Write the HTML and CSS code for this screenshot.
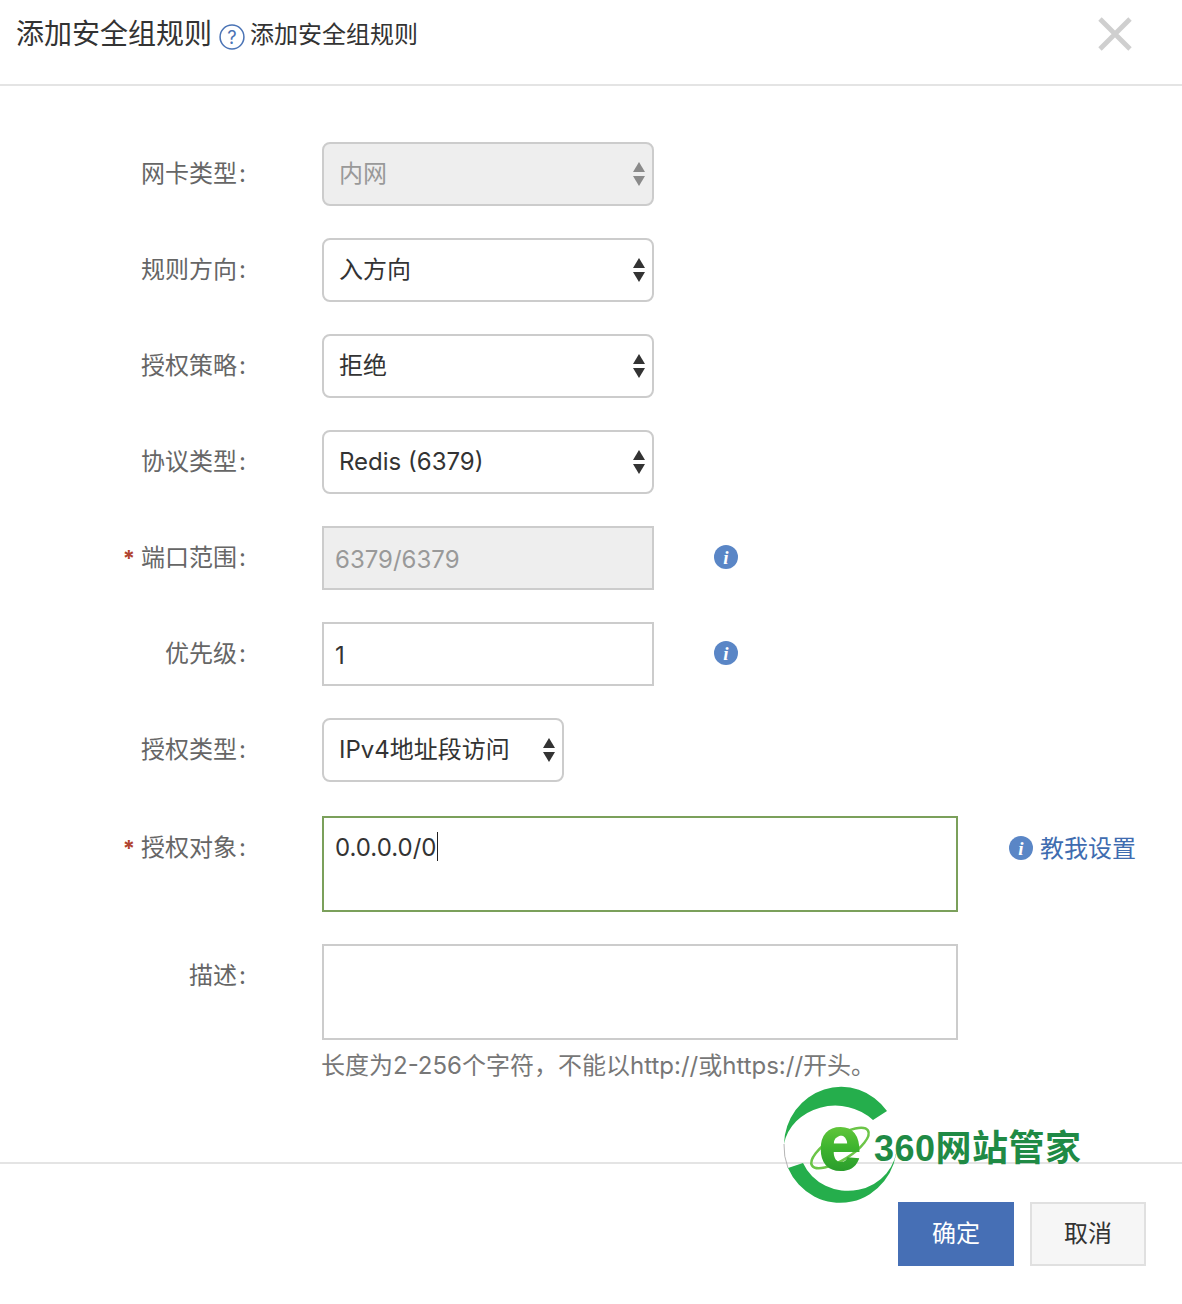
FILE: index.html
```html
<!DOCTYPE html>
<html lang="zh-CN">
<head>
    <meta charset="UTF-8">
    <title>添加安全组规则</title>
    <link rel="stylesheet" href="styles.css">
</head>
<body>
    <div class="dialog">
        <div class="dialog-header">
            <span class="dialog-title">添加安全组规则</span>
            <svg class="help-icon" viewBox="0 0 24 24">
                <circle cx="12" cy="12" r="11" fill="none" stroke="#4a73b5" stroke-width="1.4"/>
                <text x="12" y="18" text-anchor="middle" class="help-mark">?</text>
            </svg>
            <a class="dialog-subtitle">添加安全组规则</a>
            <svg class="close-icon" viewBox="0 0 34 34">
                <path d="M2 2 L32 32 M32 2 L2 32" stroke="#cfcfcf" stroke-width="4.8" fill="none"/>
            </svg>
        </div>

        <form class="dialog-body">
            <div class="form-row">
                <label class="form-label">网卡类型<span class="colon">:</span></label>
                <div class="select-wrap disabled">
                    <select class="form-select" disabled><option>内网</option></select>
                </div>
            </div>
            <div class="form-row">
                <label class="form-label">规则方向<span class="colon">:</span></label>
                <div class="select-wrap">
                    <select class="form-select"><option>入方向</option></select>
                </div>
            </div>
            <div class="form-row">
                <label class="form-label">授权策略<span class="colon">:</span></label>
                <div class="select-wrap">
                    <select class="form-select"><option>拒绝</option></select>
                </div>
            </div>
            <div class="form-row">
                <label class="form-label">协议类型<span class="colon">:</span></label>
                <div class="select-wrap">
                    <select class="form-select"><option>Redis (6379)</option></select>
                </div>
            </div>
            <div class="form-row">
                <label class="form-label"><span class="required">*</span>端口范围<span class="colon">:</span></label>
                <input class="form-input" type="text" value="6379/6379" disabled>
                <svg class="info-icon" viewBox="0 0 24 24">
                    <circle cx="12" cy="12" r="12" fill="#5a86c6"/>
                    <text x="12" y="18.5" text-anchor="middle" class="info-mark">i</text>
                </svg>
            </div>
            <div class="form-row">
                <label class="form-label">优先级<span class="colon">:</span></label>
                <input class="form-input" type="text" value="1">
                <svg class="info-icon" viewBox="0 0 24 24">
                    <circle cx="12" cy="12" r="12" fill="#5a86c6"/>
                    <text x="12" y="18.5" text-anchor="middle" class="info-mark">i</text>
                </svg>
            </div>
            <div class="form-row row-narrow">
                <label class="form-label">授权类型<span class="colon">:</span></label>
                <div class="select-wrap short">
                    <select class="form-select"><option>IPv4地址段访问</option></select>
                </div>
            </div>
            <div class="form-row">
                <label class="form-label"><span class="required">*</span>授权对象<span class="colon">:</span></label>
                <div class="area-wrap">
                    <textarea class="form-area focused">0.0.0.0/0</textarea>
                    <span class="caret"></span>
                </div>
                <a class="teach-link">
                    <svg class="info-icon small" viewBox="0 0 24 24">
                        <circle cx="12" cy="12" r="12" fill="#5a86c6"/>
                        <text x="12" y="18.5" text-anchor="middle" class="info-mark">i</text>
                    </svg>
                    教我设置
                </a>
            </div>
            <div class="form-row">
                <label class="form-label">描述<span class="colon">:</span></label>
                <div class="area-col">
                    <div class="area-wrap">
                        <textarea class="form-area"></textarea>
                    </div>
                    <p class="form-hint">长度为2-256个字符，不能以http://或https://开头。</p>
                </div>
            </div>
        </form>

        <div class="dialog-footer">
            <button class="btn btn-primary" type="button">确定</button>
            <button class="btn" type="button">取消</button>
        </div>

        <!-- watermark laid over the dialog -->
        <svg class="watermark" viewBox="0 0 310 130" width="310" height="130">
            <defs>
                <linearGradient id="eGreen" x1="0" y1="0" x2="0" y2="1">
                    <stop offset="0" stop-color="#8fdc4a"/>
                    <stop offset="0.55" stop-color="#3fb52f"/>
                    <stop offset="1" stop-color="#1f8f2b"/>
                </linearGradient>
            </defs>
            <path d="M4 64 A57 59 0 0 0 8 88" fill="none" stroke="#b5b5b5" stroke-width="1"/>
            <path d="M4 64 A57 59 0 0 1 107 31 L93 40 A52 46 0 0 0 4 64 Z" fill="#25ae4c"/>
            <path d="M8 88 L23 83 A49 46 0 0 0 117 64 A57 59 0 0 1 8 88 Z" fill="#25ae4c"/>
            <ellipse cx="60" cy="68" rx="33" ry="12" transform="rotate(-32 60 68)" fill="none" stroke="#6cc548" stroke-width="2.5"/>
            <text x="60" y="89" text-anchor="middle" class="wm-e" fill="url(#eGreen)" stroke="url(#eGreen)" stroke-width="2">e</text>
            <text x="94" y="81" class="wm-text">360网站管家</text>
        </svg>
    </div>
</body>
</html>
```

FILE: styles.css
```css
* {
    box-sizing: border-box;
}
body {
    margin: 0;
    background-color: white;
    font-family: Inter, "Noto Sans CJK SC", sans-serif;
    color: #333;
}
.dialog {
    position: relative;
    width: 1182px;
    height: 1304px;
    overflow: hidden;
}
.dialog-header {
    display: flex;
    align-items: center;
    height: 86px;
    padding: 0 50px 16px 16px;
    border-bottom: 2px solid #e4e4e4;
}
.dialog-title {
    font-size: 28px;
    line-height: 36px;
    color: #333;
}
.help-icon {
    width: 26px;
    height: 26px;
    margin: 6px 5px 0 7px;
}
.help-mark {
    font-size: 17px;
    fill: #4a73b5;
}
.dialog-subtitle {
    margin-top: 2px;
    font-size: 24px;
    line-height: 36px;
    color: #333;
}
.close-icon {
    width: 34px;
    height: 34px;
    margin-left: auto;
    margin-top: -1px;
}
.dialog-body {
    display: flex;
    flex-direction: column;
    gap: 32px;
    height: 1078px;
    padding-top: 56px;
    border-bottom: 2px solid #e4e4e4;
}
.form-row {
    display: flex;
    align-items: flex-start;
}
.row-narrow {
    margin-bottom: 2px;
}
.form-label {
    flex: 0 0 246px;
    margin-right: 76px;
    font-size: 24px;
    line-height: 64px;
    text-align: right;
    color: #666;
}
.colon {
    margin-left: 2px;
}
.required {
    margin-right: 6px;
    font-size: 22px;
    font-weight: bold;
    color: #b0442f;
}
.select-wrap {
    position: relative;
    width: 332px;
    height: 64px;
}
.select-wrap.short {
    width: 242px;
}
.select-wrap:before,
.select-wrap:after {
    content: "";
    position: absolute;
    right: 9px;
    border-left: 6px solid transparent;
    border-right: 6px solid transparent;
    pointer-events: none;
}
.select-wrap:before {
    top: 20px;
    border-bottom: 10px solid #333;
}
.select-wrap:after {
    top: 34px;
    border-top: 10px solid #333;
}
.select-wrap.disabled:before {
    border-bottom-color: #8a8a8a;
}
.select-wrap.disabled:after {
    border-top-color: #8a8a8a;
}
.form-select {
    appearance: none;
    width: 100%;
    height: 100%;
    padding: 0 30px 2px 15px;
    border: 2px solid #ccc;
    border-radius: 8px;
    background-color: white;
    font-family: inherit;
    font-size: 24px;
    color: #333;
    opacity: 1;
}
.form-select:disabled {
    background-color: #eee;
    color: #999;
}
.form-input {
    width: 332px;
    height: 64px;
    padding: 2px 12px 0 11px;
    border: 2px solid #ccc;
    background-color: white;
    font-family: inherit;
    font-size: 24px;
    color: #333;
}
.form-input:disabled {
    background-color: #eee;
    color: #999;
}
.info-icon {
    width: 24px;
    height: 24px;
    margin: 19px 0 0 60px;
}
.info-icon.small {
    margin: 4px 7px 0 0;
}
.info-mark {
    font-family: "Liberation Serif", serif;
    font-size: 19px;
    font-style: italic;
    font-weight: bold;
    fill: white;
}
.area-wrap {
    position: relative;
    width: 636px;
    height: 96px;
}
.form-area {
    display: block;
    width: 100%;
    height: 100%;
    padding: 14px 11px;
    border: 2px solid #ccc;
    outline: none;
    resize: none;
    font-family: inherit;
    font-size: 24px;
    line-height: 32px;
    color: #333;
}
.form-area.focused {
    border-color: #7ba05b;
}
.caret {
    position: absolute;
    left: 115px;
    top: 16px;
    width: 1px;
    height: 29px;
    background-color: #222;
}
.teach-link {
    display: flex;
    align-items: center;
    height: 60px;
    margin-left: 51px;
    font-size: 24px;
    color: #3f6cb0;
}
.form-hint {
    margin: 8px 0 0 -1px;
    font-size: 24px;
    line-height: 36px;
    color: #777;
    white-space: nowrap;
}
.dialog-footer {
    display: flex;
    justify-content: flex-end;
    gap: 16px;
    padding: 38px 36px;
}
.btn {
    width: 116px;
    height: 64px;
    padding-bottom: 6px;
    border: 2px solid #e0e0e0;
    background-color: #f6f6f6;
    font-family: inherit;
    font-size: 24px;
    color: #333;
}
.btn-primary {
    border-color: #466fb5;
    background-color: #466fb5;
    color: white;
}
.watermark {
    position: absolute;
    left: 780px;
    top: 1080px;
}
.wm-e {
    font-family: "Liberation Sans", sans-serif;
    font-size: 76px;
    font-weight: bold;
}
.wm-text {
    font-family: "Liberation Sans", "Noto Sans CJK SC", sans-serif;
    font-size: 36px;
    font-weight: bold;
    letter-spacing: 0.5px;
    fill: #1f8a45;
}
```
